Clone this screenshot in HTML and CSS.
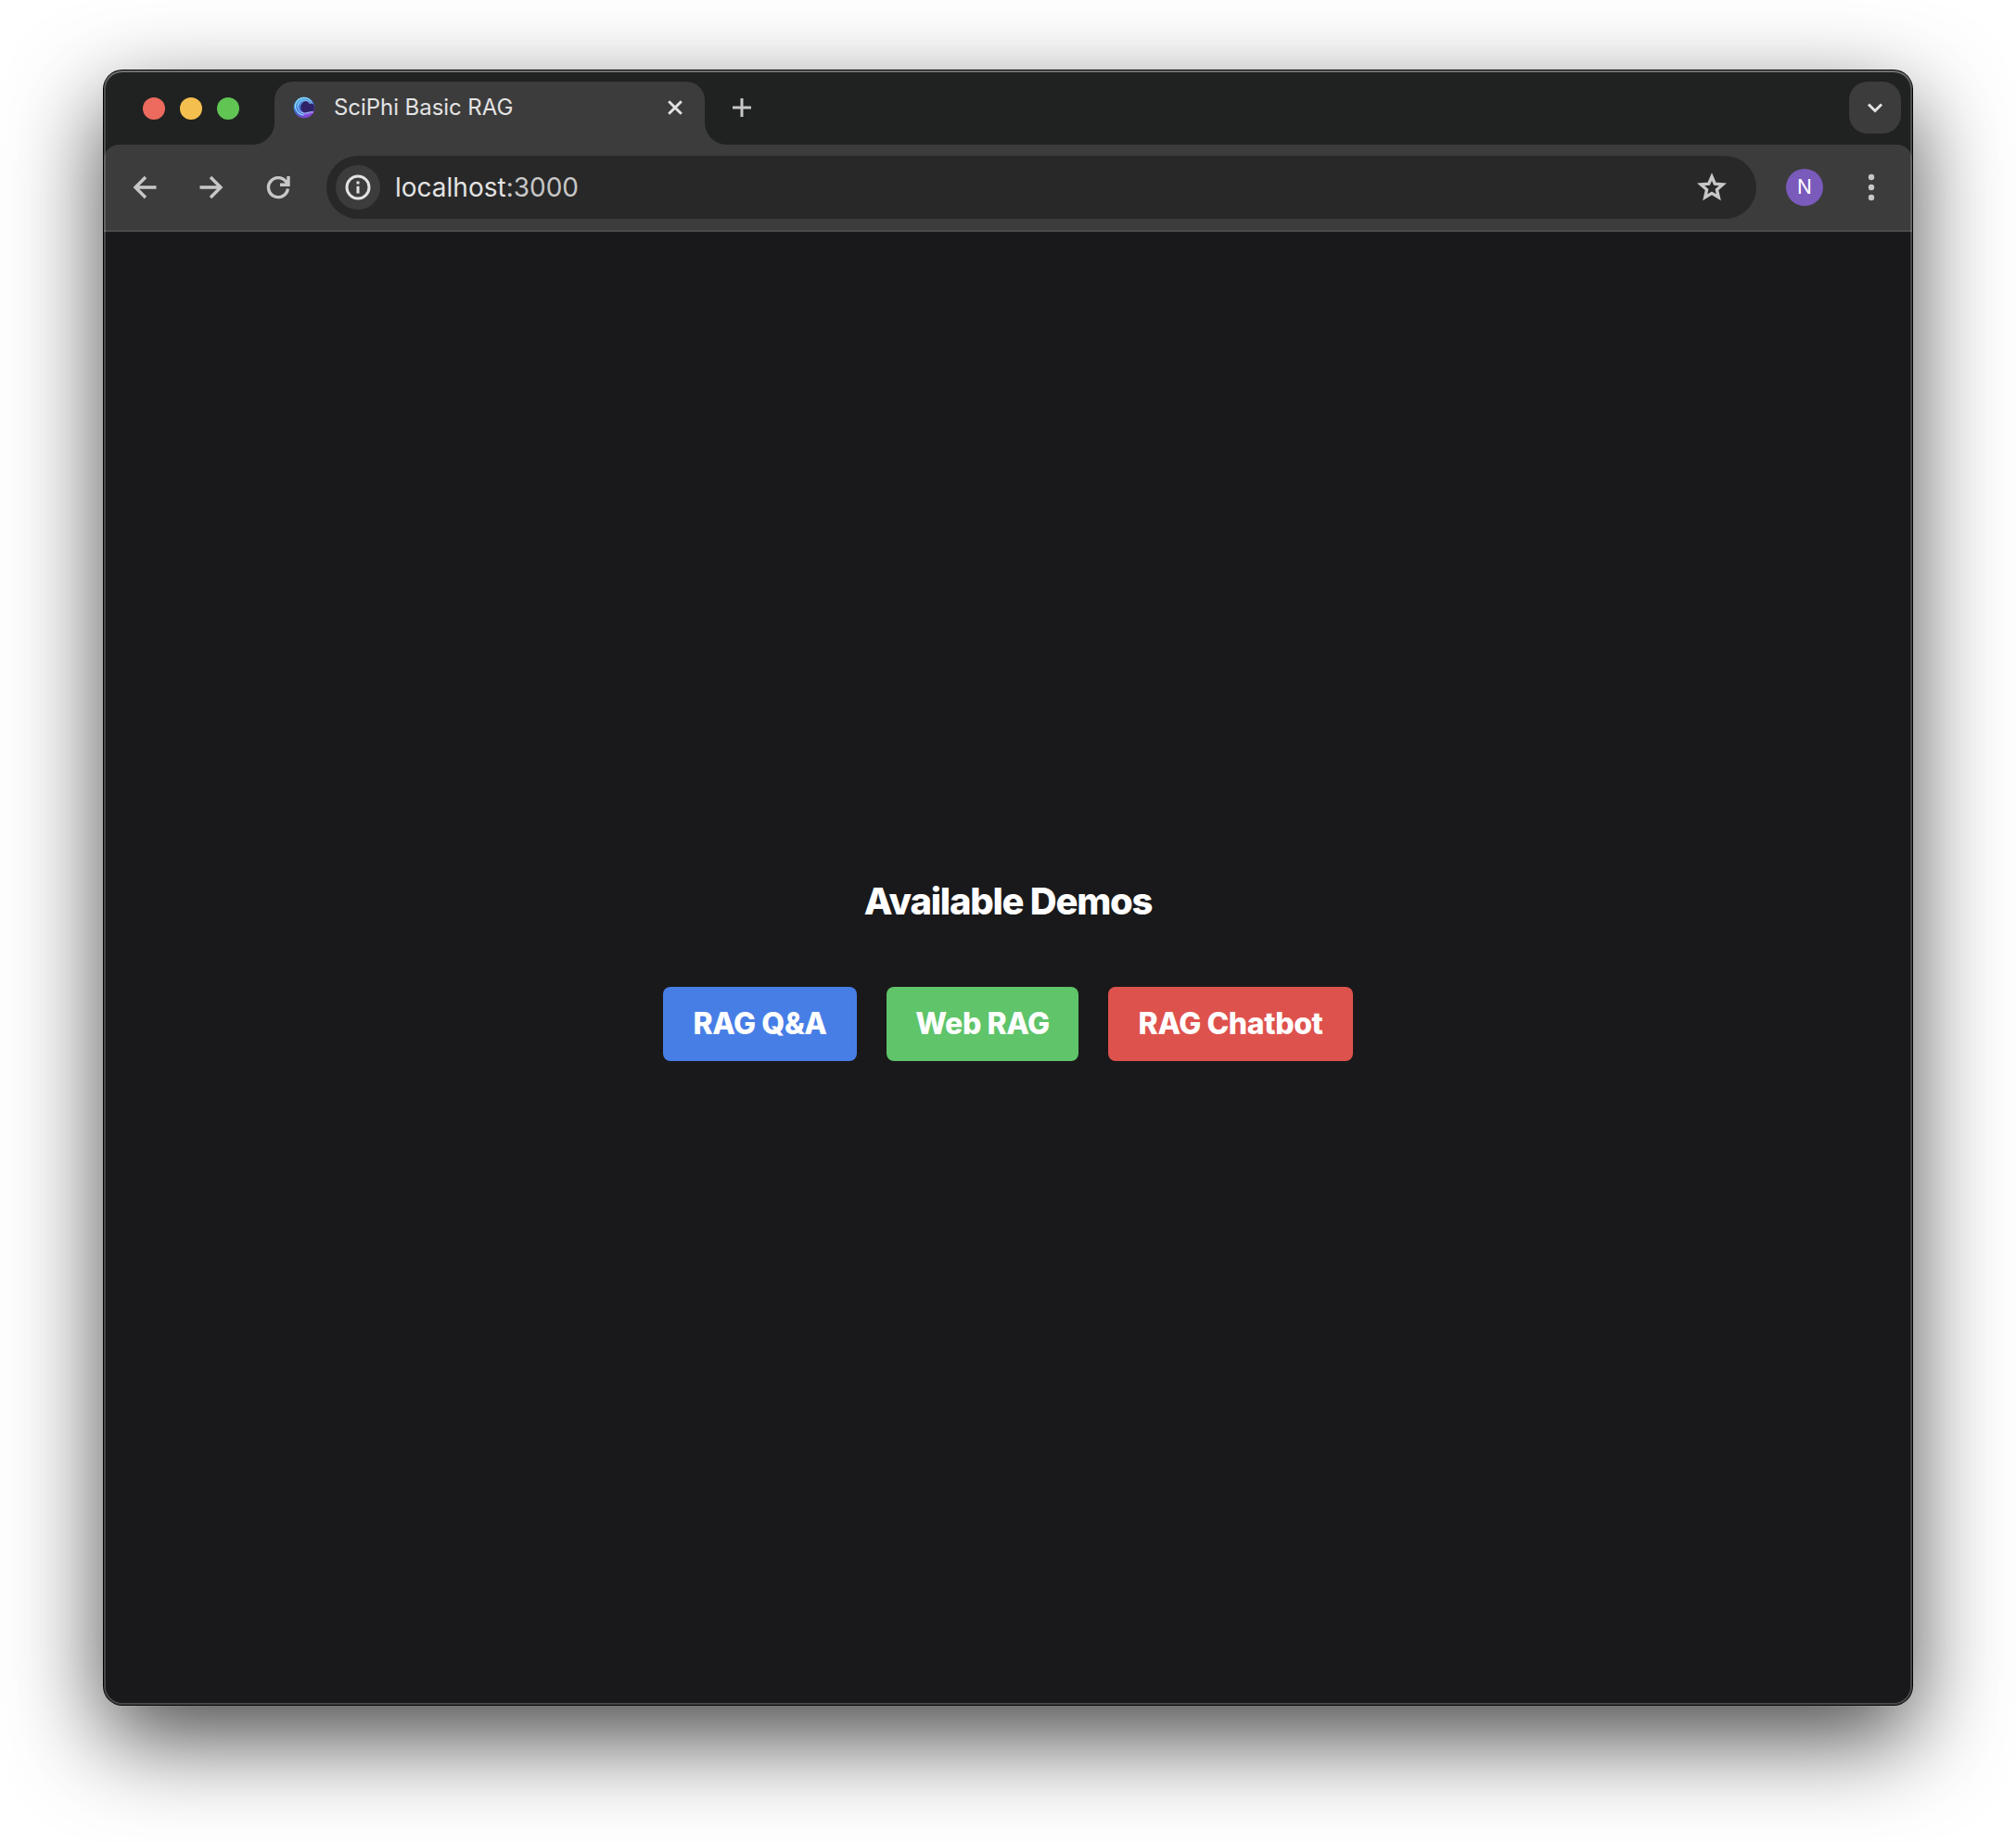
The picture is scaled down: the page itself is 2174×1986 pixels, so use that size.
FILE: index.html
```html
<!DOCTYPE html>
<html lang="en">
<head>
<meta charset="utf-8">
<title>SciPhi Basic RAG</title>
<link rel="stylesheet" href="styles.css">
</head>
<body>
<div class="window">
  <header class="tab-strip">
    <div class="lights"><span class="light red"></span><span class="light yellow"></span><span class="light green"></span></div>
    <div class="tab">
      <svg class="favicon" viewBox="0 0 24 24">
        <defs>
          <linearGradient id="wave" x1="0.2" y1="0" x2="0.7" y2="1"><stop offset="0" stop-color="#5cc4ec"/><stop offset=".5" stop-color="#3f68cf"/><stop offset="1" stop-color="#8a3fd8"/></linearGradient>
        </defs>
        <circle cx="12" cy="12" r="11.3" fill="url(#wave)"/>
        <path d="M22.6 9A11 11 0 0 1 21.8 17C18 16.5 16 19 11.5 17.3A6.6 6.6 0 1 1 20 7.500Z" fill="#2f2266"/>
        <path d="M20.500 7.500A9.300 9.300 0 1 0 12 20" fill="none" stroke="#8edcf7" stroke-width="1.2"/>
        <path d="M18.500 8A7 7 0 1 0 12.500 18C15.500 18.500 18 16 22 16.700" fill="none" stroke="#8fc4f5" stroke-width="1.1"/>
        <path d="M12 18.700C15.500 20 18 16.800 22 17" fill="none" stroke="#a874ee" stroke-width="1.500"/>
      </svg>
      <span class="tab-title">SciPhi Basic RAG</span>
      <svg class="close" viewBox="0 0 20 20"><path d="M3.200 3.200 16.800 16.800M16.800 3.200 3.200 16.800"/></svg>
    </div>
    <svg class="new-tab" viewBox="0 0 20 20"><path d="M10 0V20M0 10H20"/></svg>
    <div class="tab-search"><svg viewBox="0 0 20 12"><path d="M3 2.500 10 9.500 17 2.500"/></svg></div>
  </header>
  <div class="toolbar">
    <svg class="nav-icon" viewBox="0 0 28 28"><path d="M26.500 14H4.500M15 3 4 14 15 25"/></svg>
    <svg class="nav-icon" viewBox="0 0 28 28"><path d="M1.500 14H23.500M13 3 24 14 13 25"/></svg>
    <svg class="nav-icon" viewBox="0 0 28 28"><path d="M24.400 15.500A10.500 10.500 0 1 1 22.400 7.800L24.400 10.300M25 2V11.300H16"/></svg>
    <div class="address">
      <span class="site-info"><svg viewBox="0 0 28 28"><circle cx="14" cy="14" r="12" fill="none" stroke="#e3e3e3" stroke-width="3"/><path d="M14 12.800V20.500M14 7.500V10.500" stroke="#e3e3e3" stroke-width="3"/></svg></span>
      <span class="url">localhost<span class="port">:3000</span></span>
      <svg class="star" viewBox="0 0 34 32"><path d="M17 4.500 20.300 12.200 28.800 12.900 22.400 18.500 24.300 26.700 17 22.400 9.700 26.700 11.600 18.500 5.200 12.900 13.700 12.200Z"/></svg>
    </div>
    <span class="avatar">N</span>
    <svg class="menu" viewBox="0 0 8 30"><circle cx="4" cy="4" r="3.200"/><circle cx="4" cy="15" r="3.200"/><circle cx="4" cy="26" r="3.200"/></svg>
  </div>
  <main class="page">
    <h1>Available Demos</h1>
    <nav class="demos">
      <a class="demo qa">RAG Q&amp;A</a>
      <a class="demo web">Web RAG</a>
      <a class="demo chat">RAG Chatbot</a>
    </nav>
  </main>
</div>
</body>
</html>
```
FILE: styles.css
```css
* { box-sizing: border-box; }
body {
  margin: 0;
  height: 1986px;
  padding: 76px 112px 148px;
  background: #fff;
  overflow: hidden;
  font-family: Inter, "Liberation Sans", sans-serif;
}
svg { display: block; flex: none; }
.window {
  position: relative;
  display: flex;
  flex-direction: column;
  height: 1762px;
  border-radius: 20px;
  background: #202221;
  box-shadow: 0 0 0 1px #000, 0 36px 100px rgba(0, 0, 0, .72);
}
/* light rim drawn over the window edge */
.window::after {
  content: "";
  position: absolute;
  inset: 0;
  border-radius: 20px;
  box-shadow: inset 0 0 0 2px rgba(255, 255, 255, .2), inset 0 2px 0 rgba(255, 255, 255, .2);
  pointer-events: none;
}
.tab-strip {
  display: flex;
  align-items: flex-start;
  height: 80px;
  padding: 12px 12px 0 42px;
}
.lights { display: flex; gap: 16px; padding-top: 17px; width: 142px; }
.light { width: 24px; height: 24px; border-radius: 50%; }
.red { background: #ed6a5e; }
.yellow { background: #f5bf4f; }
.green { background: #61c554; }
.tab {
  position: relative;
  display: flex;
  align-items: center;
  width: 464px;
  height: 68px;
  padding: 0 22px 12px 20px;
  border-radius: 20px 20px 0 0;
  background: #3c3c3c;
}
.tab::before, .tab::after {
  content: "";
  position: absolute;
  bottom: 0;
  width: 24px;
  height: 24px;
}
.tab::before { right: 100%; background: radial-gradient(circle at 0 0, transparent 23.500px, #3c3c3c 24.500px); }
.tab::after { left: 100%; background: radial-gradient(circle at 100% 0, transparent 23.500px, #3c3c3c 24.500px); }
.favicon { width: 24px; height: 24px; }
.tab-title { margin-left: 20px; font-size: 24px; line-height: 30px; letter-spacing: -.06px; color: #e3e3e3; white-space: nowrap; }
.close { width: 20px; height: 20px; margin-left: auto; fill: none; stroke: #e3e3e3; stroke-width: 2.900; }
.new-tab { width: 20px; height: 20px; margin: 18px 0 0 30px; fill: none; stroke: #c7c7c7; stroke-width: 3; }
.tab-search {
  display: flex;
  align-items: center;
  justify-content: center;
  width: 56px;
  height: 56px;
  margin-left: auto;
  border-radius: 20px;
  background: #3c3c3c;
}
.tab-search svg { width: 20px; height: 12px; fill: none; stroke: #e3e3e3; stroke-width: 3; }
.toolbar {
  display: flex;
  align-items: center;
  height: 94px;
  padding: 0 40px 0 30px;
  border-bottom: 2px solid #4b4b4b;
  border-radius: 16px 16px 0 0;
  background: #3c3c3c;
}
.nav-icon { width: 28px; height: 28px; margin-right: 44px; fill: none; stroke: #c7c7c7; stroke-width: 3.400; }
.address {
  display: flex;
  align-items: center;
  width: 1542px;
  height: 68px;
  margin-left: -6px;
  padding: 0 31px 0 10px;
  border-radius: 34px;
  background: #282828;
}
.site-info { display: flex; align-items: center; justify-content: center; width: 48px; height: 48px; border-radius: 50%; background: #3c3c3c; }
.site-info svg { width: 28px; height: 28px; }
.url { margin-left: 16px; font-size: 28px; line-height: 36px; letter-spacing: 0; color: #e3e3e3; }
.port { color: #c7c7c7; }
.star { width: 34px; height: 32px; margin-left: auto; fill: none; stroke: #c7c7c7; stroke-width: 3.400; }
.avatar {
  width: 40px;
  height: 40px;
  margin-left: 32px;
  border-radius: 50%;
  background: #7a5abb;
  color: #fff;
  font-size: 21px;
  line-height: 40px;
  text-align: center;
}
.menu { width: 8px; height: 30px; margin-left: auto; fill: #c7c7c7; }
.page {
  display: flex;
  flex: 1;
  flex-direction: column;
  align-items: center;
  padding-top: 698px;
  border-radius: 0 0 20px 20px;
  background: #19191b;
  color: #fff;
  font-optical-sizing: none;
}
h1 { margin: 0 0 68px; font-size: 40px; line-height: 48px; font-weight: 760; letter-spacing: -1.250px; }
.demos { display: flex; gap: 32px; }
.demo { height: 80px; border-radius: 8px; text-align: center; font-size: 32px; line-height: 80px; font-weight: 760; letter-spacing: -.4px; white-space: nowrap; }
.qa { width: 209px; background: #477ee6; }
.web { width: 207px; background: #5fc46a; }
.chat { width: 264px; background: #de524d; }
```
